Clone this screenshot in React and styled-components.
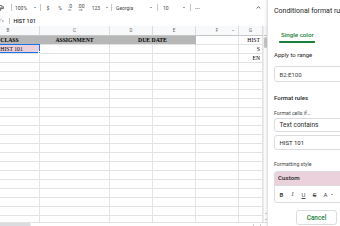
import React from "react";
import styled, { createGlobalStyle } from "styled-components";

const GlobalStyle = createGlobalStyle`
  html, body { margin: 0; padding: 0; background: #fff; }
  body { font-family: Roboto, "Liberation Sans", sans-serif; }
  * { box-sizing: border-box; }
`;

const Page = styled.div`
  display: flex;
  width: 340px;
  height: 226px;
  overflow: hidden;
`;

const Main = styled.div`
  width: 267px;
  flex-shrink: 0;
  display: flex;
  flex-direction: column;
`;

/* ---------- toolbar ---------- */

const Toolbar = styled.div`
  height: 15px;
  display: flex;
  align-items: center;
  font-size: 5px;
  color: #444746;
  white-space: nowrap;
`;

const Tool = styled.div`
  width: ${(p) => p.$w}px;
  height: 100%;
  display: flex;
  align-items: center;
  justify-content: ${(p) => p.$justify || "center"};
  padding: 0 ${(p) => p.$pr || 0}px 0 ${(p) => p.$pl || 0}px;
`;

const Sep = styled.div`
  width: 1px;
  height: ${(p) => p.$h || 7}px;
  background: #c7c7c7;
  flex-shrink: 0;
`;

const Caret = styled.span`
  width: 0;
  height: 0;
  border-left: 1.5px solid transparent;
  border-right: 1.5px solid transparent;
  border-top: 1.5px solid ${(p) => p.$color || "#444746"};
  display: inline-block;
`;

const Decimal = styled.span`
  display: inline-flex;
  flex-direction: column;
  align-items: center;
  line-height: 5px;
`;

const Spacer = styled.div`
  flex: 1;
`;

/* ---------- formula bar ---------- */

const FormulaBar = styled.div`
  height: 11px;
  display: flex;
  align-items: center;
  font-size: 5.4px;
  font-weight: 500;
  color: #1f1f1f;
`;

const FxBox = styled.div`
  width: 9px;
  height: 100%;
  display: flex;
  align-items: center;
`;

const FormulaText = styled.span`
  padding-left: 3.5px;
`;

/* ---------- sheet ---------- */

const SheetBody = styled.div`
  flex: 1;
  display: flex;
  flex-direction: column;
  min-height: 0;
`;

const SheetMid = styled.div`
  flex: 1;
  display: flex;
  min-height: 0;
`;

const Viewport = styled.div`
  width: 263px;
  overflow: hidden;
`;

const GridInner = styled.div`
  margin-left: -23px;
  width: 286px;
`;

const Row = styled.div`
  display: flex;
  height: ${(p) => p.$h || 9}px;
`;

const HeadCell = styled.div`
  width: ${(p) => p.$w}px;
  height: 100%;
  flex-shrink: 0;
  background: #f8f9fa;
  border-right: 1px solid #dadce0;
  border-bottom: 1px solid #c4c7c5;
  font-size: 4.5px;
  color: #5f6368;
  display: flex;
  align-items: center;
  justify-content: center;
  position: relative;
`;

const FilterMark = styled.span`
  position: absolute;
  right: 3px;
  top: 2.5px;
  width: 4px;
  height: 4px;
  display: flex;
  align-items: center;
  justify-content: center;
`;

const Cell = styled.div`
  width: ${(p) => p.$w}px;
  height: 100%;
  flex-shrink: 0;
  position: relative;
  background: ${(p) => p.$bg || "#fff"};
  border-right: 1px solid ${(p) => (p.$bg ? p.$bg : "#e2e3e3")};
  border-bottom: 1px solid #e2e3e3;
  font-family: "Liberation Serif", "DejaVu Serif", serif;
  font-size: 5.7px;
  font-weight: ${(p) => (p.$bold ? 700 : 400)};
  color: #000;
  display: flex;
  align-items: center;
  justify-content: ${(p) => p.$align || "flex-start"};
  padding: 0 2px 0 ${(p) => p.$pl ?? 2}px;
  white-space: nowrap;
  overflow: ${(p) => (p.$selected ? "visible" : "hidden")};
`;

const Selection = styled.div`
  position: absolute;
  left: 0;
  top: -1px;
  right: -1px;
  bottom: 0;
  border: 1px solid #1a73e8;
  pointer-events: none;
`;

const Handle = styled.div`
  position: absolute;
  right: -2px;
  bottom: -2px;
  width: 3px;
  height: 3px;
  background: #1a73e8;
  border: 0.5px solid #fff;
`;

const VScroll = styled.div`
  width: 4px;
  display: flex;
  flex-direction: column;
  align-items: center;
  border-left: 1px solid #ececec;
`;

const VScrollHead = styled.div`
  width: 100%;
  height: 10px;
  background: #f8f9fa;
  border-bottom: 1px solid #c4c7c5;
`;

const VThumb = styled.div`
  width: 3px;
  height: 11px;
  margin-top: 1px;
  border-radius: 2px;
  background: #c6c6c6;
`;

const ArrowCol = styled.div`
  margin-top: auto;
  margin-bottom: 2px;
  display: flex;
  flex-direction: column;
  gap: 5px;
  align-items: center;
`;

const TriUp = styled.span`
  width: 0;
  height: 0;
  border-left: 1.2px solid transparent;
  border-right: 1.2px solid transparent;
  border-bottom: 1.5px solid #9aa0a6;
`;

const TriDown = styled(TriUp)`
  border-bottom: none;
  border-top: 1.5px solid #9aa0a6;
`;

const TriLeft = styled.span`
  width: 0;
  height: 0;
  border-top: 1.2px solid transparent;
  border-bottom: 1.2px solid transparent;
  border-right: 1.5px solid #9aa0a6;
`;

const TriRight = styled(TriLeft)`
  border-right: none;
  border-left: 1.5px solid #9aa0a6;
`;

const HScroll = styled.div`
  height: 4px;
  display: flex;
  align-items: center;
  padding-right: 6px;
  border-top: 1px solid #e2e3e3;
`;

const HThumb = styled.div`
  width: 31px;
  height: 3px;
  background: #dadce0;
  border-radius: 0 2px 2px 0;
`;

const HArrows = styled.div`
  margin-left: auto;
  display: flex;
  gap: 6px;
  align-items: center;
`;

/* ---------- side panel ---------- */

const Panel = styled.div`
  flex: 1;
  min-width: 0;
  background: #fff;
  border-left: 1px solid #e3e3e3;
  box-shadow: -1px 0 2px rgba(60, 64, 67, 0.12);
  padding-left: 6px;
  overflow: hidden;
  display: flex;
  flex-direction: column;
  color: #1f1f1f;
  white-space: nowrap;
`;

const PanelTitle = styled.div`
  height: 22px;
  display: flex;
  align-items: center;
  font-size: 7px;
  color: #1f1f1f;
`;

const TabRow = styled.div`
  padding-top: 9px;
  display: flex;
`;

const Tab = styled.div`
  margin-left: 5.3px;
  width: 36px;
  text-align: center;
  font-size: 6.2px;
  font-weight: 500;
  line-height: 8px;
  color: #188038;
  padding-bottom: 1.5px;
  border-bottom: 2px solid #188038;
  border-radius: 0 0 1px 1px;
`;

const Label = styled.div`
  margin-top: ${(p) => p.$mt}px;
  font-size: ${(p) => p.$size || 6}px;
  line-height: ${(p) => p.$lh || 8}px;
  font-weight: ${(p) => p.$weight || 400};
  color: ${(p) => p.$color || "#1f1f1f"};
`;

const Field = styled.div`
  margin-top: ${(p) => p.$mt}px;
  width: 80px;
  height: ${(p) => p.$h}px;
  flex-shrink: 0;
  border: 1px solid #dadce0;
  border-radius: 3px;
  display: flex;
  align-items: center;
  padding-left: 4.5px;
  font-size: ${(p) => p.$size || 6}px;
  color: ${(p) => p.$color || "#1f1f1f"};
`;

const StyleBox = styled.div`
  margin-top: 2.2px;
  width: 80px;
  flex-shrink: 0;
  border: 1px solid #dadce0;
  border-radius: 3px;
  overflow: hidden;
`;

const Preview = styled.div`
  height: 13.5px;
  background: #ead1dc;
  display: flex;
  align-items: center;
  padding-left: 3px;
  font-size: 6.2px;
  font-weight: 500;
  color: #1f1f1f;
`;

const FmtRow = styled.div`
  height: 17px;
  display: flex;
  align-items: center;
  padding-left: 1px;
  border-top: 1px solid #dadce0;
  font-size: 6px;
  color: #444746;
`;

const FmtIcon = styled.span`
  width: 11px;
  text-align: center;
  font-weight: ${(p) => (p.$bold ? 700 : 400)};
  font-style: ${(p) => (p.$italic ? "italic" : "normal")};
  font-family: ${(p) => (p.$italic ? '"Liberation Serif", serif' : "inherit")};
  text-decoration: ${(p) => p.$deco || "none"};
`;

const CancelButton = styled.div`
  margin-top: 7px;
  margin-left: 22px;
  width: 41px;
  height: 15px;
  flex-shrink: 0;
  border: 1px solid #dadce0;
  border-radius: 3px;
  display: flex;
  align-items: center;
  justify-content: center;
  font-size: 6.4px;
  font-weight: 500;
  color: #188038;
`;

const columns = [
  { key: "B", w: 63 },
  { key: "C", w: 70 },
  { key: "D", w: 43 },
  { key: "E", w: 43 },
  { key: "F", w: 43 },
  { key: "G", w: 24 },
];

const sideValues = ["HIST", "S", "EN"];

const GRAY = "#b7b7b7";
const PINK = "#ead1dc";

function PlainRow({ g }) {
  return (
    <Row>
      {columns.map((c) => (
        <Cell key={c.key} $w={c.w} $align={c.key === "G" ? "flex-end" : "flex-start"}>
          {c.key === "G" ? g : null}
        </Cell>
      ))}
    </Row>
  );
}

export default function App() {
  const emptyRows = Array.from({ length: 19 }, (_, i) => i);
  return (
    <>
      <GlobalStyle />
      <Page>
        <Main>
          <Toolbar>
            <Tool $w={11} $justify="flex-start">
              <svg width="4" height="6" viewBox="0 0 4 6">
                <rect x="-3" y="0.5" width="5" height="2.5" rx="0.5" fill="none" stroke="#444746" strokeWidth="0.8" />
                <path d="M2.5 1.7 H3.4 V3.6 H0.6 V5.8" fill="none" stroke="#444746" strokeWidth="0.8" />
              </svg>
            </Tool>
            <Sep />
            <Tool $w={28} $justify="space-between" $pl={3} $pr={4.5}>
              <span>100%</span>
              <Caret />
            </Tool>
            <Sep />
            <Tool $w={14}>$</Tool>
            <Tool $w={10}>%</Tool>
            <Tool $w={10}>
              <Decimal>
                <span>.0</span>
                <svg width="4" height="2" viewBox="0 0 4 2">
                  <path d="M3.5 1 H0.6 M1.4 0.3 L0.6 1 L1.4 1.7" fill="none" stroke="#444746" strokeWidth="0.5" />
                </svg>
              </Decimal>
            </Tool>
            <Tool $w={12}>
              <Decimal>
                <span>.00</span>
                <svg width="5" height="2" viewBox="0 0 5 2">
                  <path d="M0.8 1 H4.2 M3.4 0.3 L4.2 1 L3.4 1.7" fill="none" stroke="#444746" strokeWidth="0.5" />
                </svg>
              </Decimal>
            </Tool>
            <Tool $w={24} $justify="space-between" $pl={4.7} $pr={3.5}>
              <span>123</span>
              <Caret />
            </Tool>
            <Sep />
            <Tool $w={45} $justify="space-between" $pl={4} $pr={4.8}>
              <span>Georgia</span>
              <Caret />
            </Tool>
            <Sep />
            <Tool $w={32} $justify="space-between" $pl={5} $pr={5.2}>
              <span>10</span>
              <Caret />
            </Tool>
            <Sep />
            <Tool $w={12}>⋯</Tool>
            <Spacer />
            <Tool $w={8}>
              <svg width="5" height="3" viewBox="0 0 5 3">
                <path d="M0.6 2.5 L2.5 0.7 L4.4 2.5" fill="none" stroke="#444746" strokeWidth="0.8" />
              </svg>
            </Tool>
            <Tool $w={5} />
          </Toolbar>

          <FormulaBar>
            <FxBox>
              <svg width="4" height="5" viewBox="0 0 4 5">
                <path d="M-1 4.5 L1.5 0.5 M2 1.8 L3.6 4.2 M3.6 1.8 L2 4.2" fill="none" stroke="#9aa0a6" strokeWidth="0.6" />
              </svg>
            </FxBox>
            <Sep $h={6} />
            <FormulaText>HIST 101</FormulaText>
          </FormulaBar>

          <SheetBody>
            <SheetMid>
              <Viewport>
                <GridInner>
                  <Row $h={10}>
                    {columns.map((c) => (
                      <HeadCell key={c.key} $w={c.w}>
                        {c.key}
                        {c.key === "F" && (
                          <FilterMark>
                            <Caret $color="#80868b" />
                          </FilterMark>
                        )}
                      </HeadCell>
                    ))}
                  </Row>

                  <Row>
                    <Cell $w={63} $bg={GRAY} $bold $pl={23.3}>CLASS</Cell>
                    <Cell $w={70} $bg={GRAY} $bold $align="center">ASSIGNMENT</Cell>
                    <Cell $w={86} $bg={GRAY} $bold $align="center">DUE DATE</Cell>
                    <Cell $w={43} />
                    <Cell $w={24} $align="flex-end">{sideValues[0]}</Cell>
                  </Row>

                  <Row>
                    <Cell $w={63} $bg={PINK} $pl={23.3} $selected>
                      HIST 101
                      <Selection>
                        <Handle />
                      </Selection>
                    </Cell>
                    <Cell $w={70} />
                    <Cell $w={43} />
                    <Cell $w={43} />
                    <Cell $w={43} />
                    <Cell $w={24} $align="flex-end">{sideValues[1]}</Cell>
                  </Row>

                  <PlainRow g={sideValues[2]} />
                  {emptyRows.map((i) => (
                    <PlainRow key={i} />
                  ))}
                </GridInner>
              </Viewport>
              <VScroll>
                <VScrollHead />
                <VThumb />
                <ArrowCol>
                  <TriUp />
                  <TriDown />
                </ArrowCol>
              </VScroll>
            </SheetMid>
            <HScroll>
              <HThumb />
              <HArrows>
                <TriLeft />
                <TriRight />
              </HArrows>
            </HScroll>
          </SheetBody>
        </Main>

        <Panel>
          <PanelTitle>Conditional format rules</PanelTitle>
          <TabRow>
            <Tab>Single color</Tab>
          </TabRow>
          <Label $mt={8.5}>Apply to range</Label>
          <Field $mt={7} $h={16} $color="#3c4043">B2:E100</Field>
          <Label $mt={11.7} $weight={500}>Format rules</Label>
          <Label $mt={8} $size={5.2} $lh={7} $color="#444746">Format cells if…</Label>
          <Field $mt={1.2} $h={14} $size={6.5}>Text contains</Field>
          <Field $mt={3} $h={15.5}>HIST 101</Field>
          <Label $mt={11} $size={5.2} $lh={7} $color="#444746">Formatting style</Label>
          <StyleBox>
            <Preview>Custom</Preview>
            <FmtRow>
              <FmtIcon $bold>B</FmtIcon>
              <FmtIcon $italic>I</FmtIcon>
              <FmtIcon $deco="underline">U</FmtIcon>
              <FmtIcon $deco="line-through">S</FmtIcon>
              <FmtIcon>A</FmtIcon>
              <Caret />
            </FmtRow>
          </StyleBox>
          <CancelButton>Cancel</CancelButton>
        </Panel>
      </Page>
    </>
  );
}
